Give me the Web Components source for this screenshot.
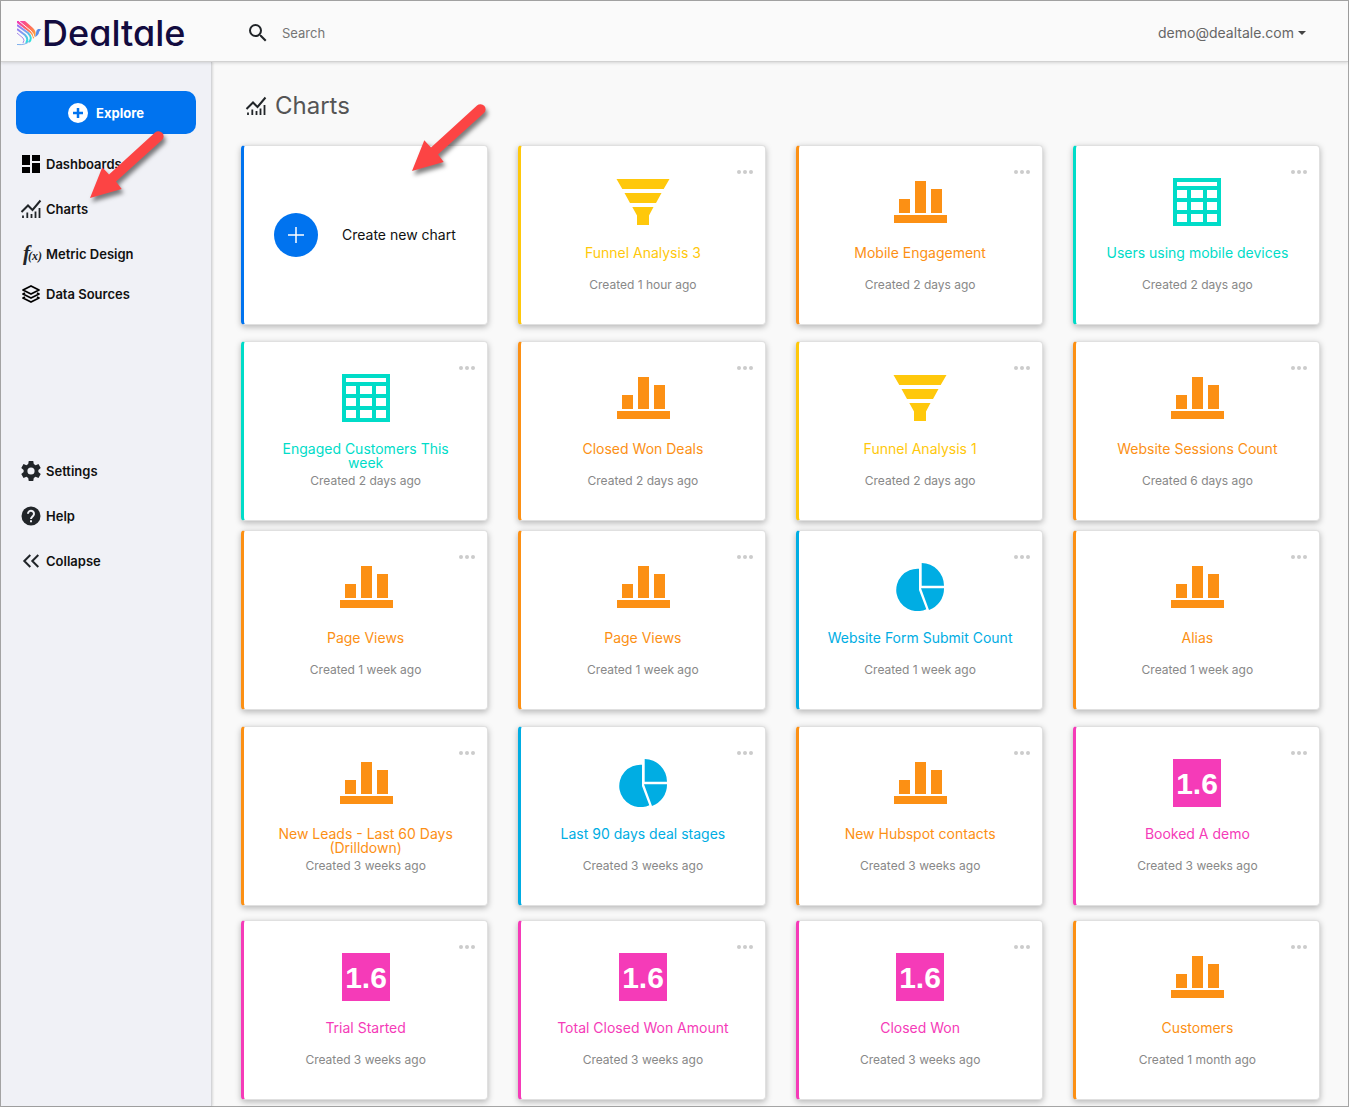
<!DOCTYPE html>
<html lang="en">
<head>
<meta charset="utf-8">
<meta name="viewport" content="width=device-width, initial-scale=1">
<title>Dealtale - Charts</title>
<style>
  * { box-sizing: border-box; }
  body {
    margin: 0;
    font-family: Inter, "Liberation Sans", sans-serif;
    color: #111;
    background: #f9f9f9;
  }
</style>
</head>
<body>
<app-shell>
  <app-header slot="header" email="demo@dealtale.com"></app-header>
  <app-sidebar slot="sidebar">
    <nav-item icon="dashboards">Dashboards</nav-item>
    <nav-item icon="charts" pointed>Charts</nav-item>
    <nav-item icon="metric">Metric Design</nav-item>
    <nav-item icon="sources" compact>Data Sources</nav-item>
    <nav-item slot="bottom" icon="settings">Settings</nav-item>
    <nav-item slot="bottom" icon="help">Help</nav-item>
    <nav-item slot="bottom" icon="collapse">Collapse</nav-item>
  </app-sidebar>
  <page-title icon="charts">Charts</page-title>
  <card-grid>
    <create-card>Create new chart</create-card>
    <chart-card type="funnel" created="1 hour ago">Funnel Analysis 3</chart-card>
    <chart-card type="bar" created="2 days ago">Mobile Engagement</chart-card>
    <chart-card type="table" created="2 days ago">Users using mobile devices</chart-card>
    <chart-card type="table" created="2 days ago">Engaged Customers This week</chart-card>
    <chart-card type="bar" created="2 days ago">Closed Won Deals</chart-card>
    <chart-card type="funnel" created="2 days ago">Funnel Analysis 1</chart-card>
    <chart-card type="bar" created="6 days ago">Website Sessions Count</chart-card>
  </card-grid>
  <card-grid>
    <chart-card type="bar" created="1 week ago">Page Views</chart-card>
    <chart-card type="bar" created="1 week ago">Page Views</chart-card>
    <chart-card type="pie" created="1 week ago">Website Form Submit Count</chart-card>
    <chart-card type="bar" created="1 week ago">Alias</chart-card>
    <chart-card type="bar" created="3 weeks ago">New Leads - Last 60 Days (Drilldown)</chart-card>
    <chart-card type="pie" created="3 weeks ago">Last 90 days deal stages</chart-card>
    <chart-card type="bar" created="3 weeks ago">New Hubspot contacts</chart-card>
    <chart-card type="number" created="3 weeks ago">Booked A demo</chart-card>
  </card-grid>
  <card-grid>
    <chart-card type="number" created="3 weeks ago">Trial Started</chart-card>
    <chart-card type="number" created="3 weeks ago">Total Closed Won Amount</chart-card>
    <chart-card type="number" created="3 weeks ago">Closed Won</chart-card>
    <chart-card type="bar" created="1 month ago">Customers</chart-card>
  </card-grid>
</app-shell>

<script>
const ICONS = {
  dashboards: '<path fill="#000" d="M3 3h8v10H3zM13 3h8v6h-8zM13 11h8v10h-8zM3 15h8v6H3z"/>',
  charts: '<g fill="none" stroke="#212529" stroke-width="2"><path d="M2.500 15 9 8.500l4.500 4.500L21.500 3.500"/><path stroke-width="1.800" d="M4 18.500V21M8.300 15.500V21M12.500 17v4M16.500 14.500V21M20.500 11v10"/></g>',
  metric: '<g font-family="Liberation Serif, serif" font-style="italic" fill="#212529"><text x="4" y="18" font-weight="700" font-size="21">f</text><text x="9" y="18" font-weight="700" font-size="12">(x)</text></g>',
  sources: '<g fill="none" stroke="#000" stroke-width="1.800" stroke-linejoin="round"><path d="M12 4 20 8l-8 4-8-4z"/><path d="M6 11l-2 1 8 4 8-4-2-1"/><path d="M6 15l-2 1 8 4 8-4-2-1"/></g>',
  settings: '<path fill="#212529" fill-rule="evenodd" transform="translate(1.200 1.200) scale(.9)" d="M9.500 1h5l.6 3.300 2 1.200 3.200-1.200 2.500 4.300-2.600 2.200v2.400l2.600 2.200-2.500 4.300-3.200-1.200-2 1.200-.6 3.300h-5l-.6-3.300-2-1.200-3.200 1.200-2.500-4.300 2.600-2.200v-2.400L1.200 8.600l2.500-4.300 3.200 1.200 2-1.200zM12 8a4 4 0 1 0 0 8 4 4 0 0 0 0-8z"/>',
  help: '<circle cx="12" cy="12" r="9.500" fill="#212529"/><path fill="none" stroke="#f0f1f6" stroke-width="2" d="M9 9.800a3 3 0 1 1 5.200 2C13 13 12 13.500 12 15"/><path fill="#f0f1f6" d="M11 16.200h2v2h-2z"/>',
  collapse: '<path fill="none" stroke="#212529" stroke-width="2" d="M11.300 6 5.300 12l6 6M19.300 6l-6 6 6 6"/>',
  search: '<path fill="#212529" d="M15.500 14h-.79l-.28-.27A6.470 6.470 0 0 0 16 9.500 6.500 6.500 0 1 0 9.500 16c1.610 0 3.090-.59 4.230-1.570l.27.28v.79l5 4.990L20.490 19l-4.990-5zm-6 0C7.010 14 5 11.990 5 9.500S7.010 5 9.500 5 14 7.010 14 9.500 11.990 14 9.500 14z"/>',
  add: '<circle cx="12" cy="12" r="12" fill="#fff"/><path stroke="#0073ef" stroke-width="3" d="M12 6v12M6 12h12"/>'
};

// Every chart type has its own accent colour and 56x48 picture
const CHART_TYPES = {
  bar: {
    color: '#fc9014',
    art: '<path d="M2 37h53v8H2zM7 21h11v14H7zM23 3h11v32H23zM39 11h11v24H39z"/>'
  },
  funnel: {
    color: '#ffc80b',
    art: '<path d="M1.500 1h53l-5.800 10H7.300zM9.500 15h37L41 25H15zM17.300 29h21.200L34 37.500V47H22v-9.500z"/>'
  },
  table: {
    color: '#00dcc8',
    art: '<path fill-rule="evenodd" d="M4 0h48v48H4zM8 4v4h40V4zM8 12v8h10v-8zM22 12v8h12v-8zM38 12v8h10v-8zM8 24v8h10v-8zM22 24v8h12v-8zM38 24v8h10v-8zM8 36v8h10v-8zM22 36v8h12v-8zM38 36v8h10v-8z"/>'
  },
  pie: {
    color: '#00ade3',
    art: '<path d="M27 5.800V27l7.300 19.200A21.200 21.200 0 1 1 27 5.800zM29.700 0A22.300 22.700 0 0 1 52 22.700H29.700zM29 25.300h23A22.500 22.500 0 0 1 37 47z"/>'
  },
  number: {
    color: '#f53bb8',
    art: '<path d="M4 0h48v48H4z"/><text x="28" y="35" text-anchor="middle" fill="#fff" font-family="Liberation Sans, sans-serif" font-weight="700" font-size="30">1.6</text>'
  }
};

class UiIcon extends HTMLElement {
  connectedCallback() {
    if (this.shadowRoot) return;
    this.attachShadow({ mode: 'open' });
    this.shadowRoot.innerHTML = `
      <style>
        :host { display: inline-block; flex: none; width: 24px; height: 24px; }
        svg { display: block; width: 100%; height: 100%; overflow: visible; }
      </style>
      <svg viewBox="0 0 24 24" aria-hidden="true">${ICONS[this.getAttribute('name')]}</svg>
    `;
  }
}

class AppShell extends HTMLElement {
  constructor() {
    super();
    this.attachShadow({ mode: 'open' });
    this.shadowRoot.innerHTML = `
      <style>
        :host {
          display: grid;
          grid-template: auto 1fr / 211px minmax(0, 1fr);
          box-sizing: border-box;
          min-height: 100vh;
          border: 1px solid #a5a5a5;
        }
        slot[name="header"] { display: block; grid-column: 1 / -1; position: relative; z-index: 1; }
        slot[name="sidebar"] { display: grid; }
        main { padding: 29px 28px 6px 29px; }
      </style>
      <slot name="header"></slot>
      <slot name="sidebar"></slot>
      <main><slot></slot></main>
    `;
  }
}

class AppLogo extends HTMLElement {
  constructor() {
    super();
    this.attachShadow({ mode: 'open' });
    this.shadowRoot.innerHTML = `
      <style>
        :host { display: block; }
        a {
          display: flex;
          align-items: center;
          gap: 1px;
          color: #120b3f;
          font-size: 36px;
          font-weight: 500;
          line-height: 40px;
          font-feature-settings: "cv11";
          text-decoration: none;
        }
        svg { flex: none; width: 24px; height: 26px; }
      </style>
      <a href="#">
        <svg viewBox="0 0 24 26" fill="none" aria-hidden="true">
          <defs>
            <linearGradient id="warm" gradientUnits="userSpaceOnUse" x1="0" y1="1" x2="15" y2="16">
              <stop offset="0" stop-color="#f03cc0"/><stop offset=".5" stop-color="#ff5c6c"/><stop offset="1" stop-color="#ff9a3c"/>
            </linearGradient>
            <linearGradient id="cool" gradientUnits="userSpaceOnUse" x1="0" y1="5" x2="12" y2="20">
              <stop offset="0" stop-color="#a26bf0"/><stop offset=".5" stop-color="#7f9cf2"/><stop offset="1" stop-color="#2fe0dc"/>
            </linearGradient>
          </defs>
          <path fill="url(#warm)" d="M3 1h5l8 7q4 4 2 8l-2 3q0-4-4-7L0 3V1z"/>
          <path stroke="#fafafa" stroke-width="1" d="M2 1l12 10q3 3 3 6"/>
          <path stroke="url(#cool)" stroke-width="2" d="M0 5l11 8q5 5 1 9"/>
          <path stroke="url(#cool)" stroke-width="2" d="M0 9l8 6q4 4 1 8"/>
          <path stroke="#a78bea" stroke-width="1" d="M0 13l6 5q2 2 0 5"/>
          <path stroke="#7fb0ec" stroke-width="1" d="M0 24.500q9 1 13-4"/>
          <path fill="#5b8ee8" d="M24 9h-3q-2 1-2 4l-1 4q4-2 4-5z"/>
        </svg>
        <span>Dealtale</span>
      </a>
    `;
  }
}

class AppHeader extends HTMLElement {
  constructor() {
    super();
    this.attachShadow({ mode: 'open' });
    this.shadowRoot.innerHTML = `
      <style>
        :host {
          display: flex;
          align-items: center;
          box-sizing: border-box;
          height: 61px;
          padding: 3px 42px 0 16px;
          background: #fafafa;
          border-bottom: 1px solid #d2d2d2;
          box-shadow: 0 1px 3px rgba(0, 0, 0, 0.15);
        }
        app-logo { width: 229px; }
        form { flex: 1; display: flex; align-items: center; gap: 12px; }
        label { display: flex; }
        input {
          flex: 1;
          padding: 0;
          border: 0;
          outline: 0;
          background: none;
          font: 13px/20px Inter, sans-serif;
          color: #333;
        }
        input::placeholder { color: #757575; }
        button {
          display: flex;
          align-items: center;
          gap: 4px;
          padding: 0;
          border: 0;
          background: none;
          font: 14px/20px Inter, sans-serif;
          color: #666;
        }
        button::after {
          content: "";
          border: 4px solid transparent;
          border-top-color: #444;
          border-bottom: 0;
        }
      </style>
      <app-logo></app-logo>
      <form role="search">
        <label for="search"><ui-icon name="search"></ui-icon></label>
        <input id="search" type="text" placeholder="Search" aria-label="Search">
      </form>
      <button type="button">${this.getAttribute('email')}</button>
    `;
  }
}

class AppSidebar extends HTMLElement {
  constructor() {
    super();
    this.attachShadow({ mode: 'open' });
    this.shadowRoot.innerHTML = `
      <style>
        :host {
          display: block;
          padding: 29px 15px;
          background: #f0f1f6;
          border-right: 1px solid #d4d5d8;
          box-shadow: 1px 0 2px rgba(0, 0, 0, 0.12);
        }
        button {
          display: flex;
          align-items: center;
          justify-content: center;
          gap: 8px;
          width: 100%;
          height: 43px;
          margin-bottom: 7px;
          border: 0;
          border-radius: 10px;
          background: #0073ef;
          color: #fff;
          font: 700 13px/20px Inter, sans-serif;
        }
        button ui-icon { width: 20px; height: 20px; }
        .bottom { margin-top: 137px; }
      </style>
      <button type="button"><ui-icon name="add"></ui-icon>Explore</button>
      <nav>
        <slot></slot>
        <div class="bottom"><slot name="bottom"></slot></div>
      </nav>
    `;
  }
}

class NavItem extends HTMLElement {
  constructor() {
    super();
    this.attachShadow({ mode: 'open' });
    this.shadowRoot.innerHTML = `
      <style>
        :host { display: block; position: relative; }
        a {
          display: flex;
          align-items: center;
          gap: 3px;
          height: 45px;
          padding-left: 3px;
          color: #111;
          font-size: 13px;
          font-weight: 600;
          line-height: 20px;
          text-decoration: none;
        }
        :host([compact]) a { height: 35px; }
        callout-arrow { left: 70px; top: -62px; }
      </style>
      <a href="#"><ui-icon name="${this.getAttribute('icon')}"></ui-icon><span><slot></slot></span></a>
      ${this.hasAttribute('pointed') ? '<callout-arrow></callout-arrow>' : ''}
    `;
  }
}

class PageTitle extends HTMLElement {
  constructor() {
    super();
    this.attachShadow({ mode: 'open' });
    this.shadowRoot.innerHTML = `
      <style>
        :host { display: block; margin-bottom: 24px; }
        h1 {
          display: flex;
          align-items: center;
          gap: 7px;
          margin: 0;
          padding-left: 3px;
          color: #555;
          font-size: 24px;
          font-weight: 400;
          line-height: 30px;
        }
      </style>
      <h1><ui-icon name="${this.getAttribute('icon')}"></ui-icon><slot></slot></h1>
    `;
  }
}

class CardGrid extends HTMLElement {
  constructor() {
    super();
    this.attachShadow({ mode: 'open' });
    this.shadowRoot.innerHTML = `
      <style>
        :host {
          display: grid;
          grid-template-columns: repeat(4, minmax(0, 1fr));
          gap: 16px 30px;
          margin-bottom: 9px;
        }
        :host(:last-child) { margin: 14px 0 0; }
      </style>
      <slot></slot>
    `;
  }
}

// Shared box of all the cards in the grid
const CARD_STYLE = `
  :host {
    display: block;
    position: relative;
    box-sizing: border-box;
    height: 180px;
    border: 1px solid #e0e0e0;
    border-left: 3px solid var(--accent);
    border-radius: 4px;
    background: #fff;
    box-shadow: 0 2px 6px rgba(0, 0, 0, 0.28);
  }
`;

class CreateCard extends HTMLElement {
  constructor() {
    super();
    this.attachShadow({ mode: 'open' });
    this.shadowRoot.innerHTML = `
      <style>
        ${CARD_STYLE}
        :host { --accent: #0073ef; }
        button {
          display: flex;
          align-items: center;
          gap: 24px;
          width: 100%;
          height: 100%;
          padding: 0 30px;
          border: 0;
          background: none;
          color: #111;
          font: 14px/20px Inter, sans-serif;
        }
        svg { flex: none; width: 44px; height: 44px; }
        callout-arrow { left: 164px; top: -49px; }
      </style>
      <button type="button">
        <svg viewBox="0 0 44 44" aria-hidden="true">
          <circle cx="22" cy="22" r="22" fill="#0073ef"/>
          <path stroke="#fff" stroke-width="1.500" d="M22 14v16M14 22h16"/>
        </svg>
        <span><slot></slot></span>
      </button>
      <callout-arrow></callout-arrow>
    `;
  }
}

class ChartCard extends HTMLElement {
  constructor() {
    super();
    const type = CHART_TYPES[this.getAttribute('type')];
    this.attachShadow({ mode: 'open' });
    this.shadowRoot.innerHTML = `
      <style>
        ${CARD_STYLE}
        :host { --accent: ${type.color}; padding: 32px 26px 0; text-align: center; }
        .art { display: block; width: 56px; height: 48px; margin: 0 auto 20px; fill: var(--accent); }
        h2 {
          height: 28px;
          margin: 0;
          font-size: 14px;
          font-weight: 400;
          line-height: 14px;
        }
        a { color: var(--accent); text-decoration: none; }
        p { margin: 0; color: #888; font-size: 12px; line-height: 22px; }
        button {
          position: absolute;
          top: 16px;
          right: 12px;
          padding: 0;
          border: 0;
          background: none;
        }
        button svg { display: block; width: 16px; height: 20px; fill: #ccc; }
      </style>
      <button type="button" aria-label="More">
        <svg viewBox="0 0 16 20"><circle cx="2" cy="10" r="2"/><circle cx="8" cy="10" r="2"/><circle cx="14" cy="10" r="2"/></svg>
      </button>
      <svg class="art" viewBox="0 0 56 48" aria-hidden="true">${type.art}</svg>
      <h2><a href="#"><slot></slot></a></h2>
      <p>Created ${this.getAttribute('created')}</p>
    `;
  }
}

// Red pointer, laid over its host
class CalloutArrow extends HTMLElement {
  constructor() {
    super();
    this.attachShadow({ mode: 'open' });
    this.shadowRoot.innerHTML = `
      <style>
        :host { position: absolute; z-index: 2; pointer-events: none; }
        svg {
          display: block;
          width: 84px;
          height: 80px;
          overflow: visible;
          filter: drop-shadow(2px 4px 2px rgba(0, 0, 0, 0.5));
        }
      </style>
      <svg viewBox="0 0 84 80" fill="#fc4444" aria-hidden="true">
        <path d="M4 74 16.300 43.300 23 50.600 69 8.600a5 5 0 0 1 7 7.400L30 57.600 35.700 65z"/>
      </svg>
    `;
  }
}

customElements.define('ui-icon', UiIcon);
customElements.define('callout-arrow', CalloutArrow);
customElements.define('app-logo', AppLogo);
customElements.define('app-shell', AppShell);
customElements.define('app-header', AppHeader);
customElements.define('app-sidebar', AppSidebar);
customElements.define('nav-item', NavItem);
customElements.define('page-title', PageTitle);
customElements.define('card-grid', CardGrid);
customElements.define('create-card', CreateCard);
customElements.define('chart-card', ChartCard);
</script>
</body>
</html>
